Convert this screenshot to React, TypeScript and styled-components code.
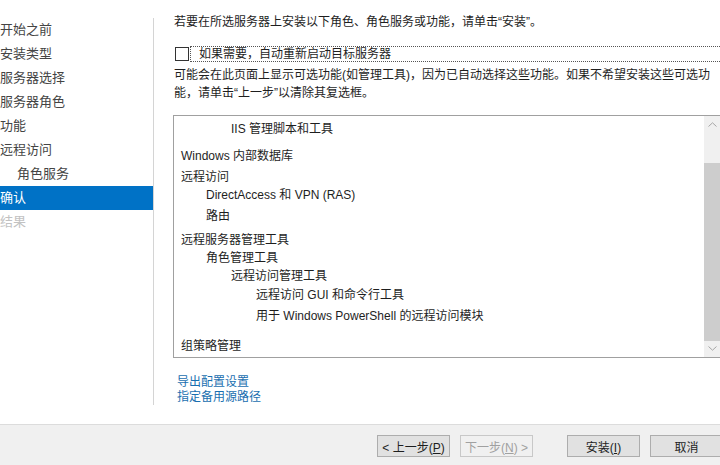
import styled, { createGlobalStyle } from "styled-components";

const GlobalStyle = createGlobalStyle`
  html, body {
    margin: 0;
    padding: 0;
    background: #ffffff;
  }
  body {
    font-family: "Liberation Sans", "Noto Sans CJK SC", sans-serif;
    font-size: 12px;
    color: #1e1e1e;
  }
`;

const Window = styled.div`
  width: 720px;
  height: 465px;
  overflow: hidden;
  display: flex;
  flex-direction: column;
  background: #ffffff;
`;

const Body = styled.div`
  flex: 1;
  display: flex;
  min-height: 0;
`;

const Sidebar = styled.nav`
  width: 153px;
  flex-shrink: 0;
  margin-top: 18px;
  height: 387px;
  border-right: 1px solid #d4d4d4;
  display: flex;
  flex-direction: column;
`;

const NavItem = styled.div<{ $indent?: boolean; $active?: boolean; $disabled?: boolean }>`
  height: 24px;
  line-height: 24px;
  font-size: 13px;
  padding-left: ${(p) => (p.$indent ? 17 : 0)}px;
  white-space: nowrap;
  color: ${(p) => (p.$active ? "#ffffff" : p.$disabled ? "#c2c2c2" : "#444444")};
  background: ${(p) => (p.$active ? "#0072c6" : "transparent")};
`;

const Main = styled.main`
  flex: 1;
  min-width: 0;
  padding: 13px 0 0 19px;
  overflow: hidden;
`;

const Intro = styled.p`
  margin: 0 0 0 1px;
  line-height: 18px;
  white-space: nowrap;
`;

const CheckRow = styled.label`
  display: flex;
  align-items: center;
  margin: 15px -30px 0 2px;
  height: 16px;
`;

const Box = styled.span`
  width: 12px;
  height: 12px;
  border: 1px solid #333333;
  flex-shrink: 0;
`;

const CheckText = styled.span`
  flex: 1;
  height: 14px;
  line-height: 14px;
  margin-left: 1px;
  padding-left: 8px;
  border: 1px dotted #555555;
  white-space: nowrap;
`;

const Note = styled.p`
  margin: 4px 0 0 1px;
  line-height: 18px;
  white-space: nowrap;
`;

const ListBox = styled.div`
  position: relative;
  margin-top: 13px;
  width: 547px;
  height: 241px;
  border: 1px solid #a0a0a0;
  overflow: hidden;
`;

const Item = styled.div<{ $level: number; $gap: number }>`
  line-height: 18px;
  height: 18px;
  margin-top: ${(p) => p.$gap}px;
  padding-left: ${(p) => 7 + p.$level * 25}px;
  white-space: nowrap;
`;

const ScrollBar = styled.div`
  position: absolute;
  top: 0;
  right: 0;
  width: 17px;
  height: 100%;
  background: #f0f0f0;
  display: flex;
  flex-direction: column;
`;

const Arrow = styled.div`
  height: 17px;
  display: flex;
  align-items: center;
  justify-content: center;
`;

const Track = styled.div`
  flex: 1;
  padding-top: 30px;
  display: flex;
  flex-direction: column;
`;

const Thumb = styled.div`
  height: 178px;
  background: #cdcdcd;
`;

const Links = styled.div`
  margin: 17px 0 0 4px;
  display: flex;
  flex-direction: column;
`;

const Link = styled.a`
  line-height: 15px;
  color: #1a6fb0;
  text-decoration: none;
  white-space: nowrap;
`;

const Footer = styled.footer`
  box-sizing: border-box;
  height: 41px;
  flex-shrink: 0;
  border-top: 1px solid #dcdcdc;
  background: #f0f0f0;
  display: flex;
  align-items: flex-start;
  padding: 10px 0 0 377px;
`;

const Button = styled.button<{ $gap?: number }>`
  width: 73px;
  height: 22px;
  margin-left: ${(p) => p.$gap ?? 0}px;
  flex-shrink: 0;
  padding: 0;
  font-family: inherit;
  font-size: 12px;
  color: ${(p) => (p.disabled ? "#a0a0a0" : "#1e1e1e")};
  background: ${(p) => (p.disabled ? "#f0f0f0" : "#e1e1e1")};
  border: 1px solid ${(p) => (p.disabled ? "#c8c8c8" : "#adadad")};
  u {
    text-decoration: underline;
  }
`;

const items: { text: string; level: number; gap: number }[] = [
  { text: "IIS 管理脚本和工具", level: 2, gap: 4 },
  { text: "Windows 内部数据库", level: 0, gap: 9 },
  { text: "远程访问", level: 0, gap: 3 },
  { text: "DirectAccess 和 VPN (RAS)", level: 1, gap: 0 },
  { text: "路由", level: 1, gap: 3 },
  { text: "远程服务器管理工具", level: 0, gap: 6 },
  { text: "角色管理工具", level: 1, gap: 0 },
  { text: "远程访问管理工具", level: 2, gap: 0 },
  { text: "远程访问 GUI 和命令行工具", level: 3, gap: 1 },
  { text: "用于 Windows PowerShell 的远程访问模块", level: 3, gap: 3 },
  { text: "组策略管理", level: 0, gap: 12 },
];

const Chevron = ({ up }: { up?: boolean }) => (
  <svg width="9" height="5" viewBox="0 0 9 5">
    <path
      d={up ? "M0.5 4.5 L4.5 0.8 L8.5 4.5" : "M0.5 0.5 L4.5 4.2 L8.5 0.5"}
      fill="none"
      stroke="#a6a6a6"
      strokeWidth="1"
    />
  </svg>
);

export default function App() {
  return (
    <>
      <GlobalStyle />
      <Window>
        <Body>
          <Sidebar>
            <NavItem>开始之前</NavItem>
            <NavItem>安装类型</NavItem>
            <NavItem>服务器选择</NavItem>
            <NavItem>服务器角色</NavItem>
            <NavItem>功能</NavItem>
            <NavItem>远程访问</NavItem>
            <NavItem $indent>角色服务</NavItem>
            <NavItem $active>确认</NavItem>
            <NavItem $disabled>结果</NavItem>
          </Sidebar>
          <Main>
            <Intro>若要在所选服务器上安装以下角色、角色服务或功能，请单击“安装”。</Intro>
            <CheckRow>
              <Box />
              <CheckText>如果需要，自动重新启动目标服务器</CheckText>
            </CheckRow>
            <Note>
              可能会在此页面上显示可选功能(如管理工具)，因为已自动选择这些功能。如果不希望安装这些可选功
              <br />
              能，请单击“上一步”以清除其复选框。
            </Note>
            <ListBox>
              {items.map((it) => (
                <Item key={it.text} $level={it.level} $gap={it.gap}>
                  {it.text}
                </Item>
              ))}
              <ScrollBar>
                <Arrow>
                  <Chevron up />
                </Arrow>
                <Track>
                  <Thumb />
                </Track>
                <Arrow>
                  <Chevron />
                </Arrow>
              </ScrollBar>
            </ListBox>
            <Links>
              <Link href="#">导出配置设置</Link>
              <Link href="#">指定备用源路径</Link>
            </Links>
          </Main>
        </Body>
        <Footer>
          <Button>
            &lt; 上一步(<u>P</u>)
          </Button>
          <Button $gap={10} disabled>
            下一步(<u>N</u>) &gt;
          </Button>
          <Button $gap={34}>
            安装(<u>I</u>)
          </Button>
          <Button $gap={10}>取消</Button>
        </Footer>
      </Window>
    </>
  );
}
